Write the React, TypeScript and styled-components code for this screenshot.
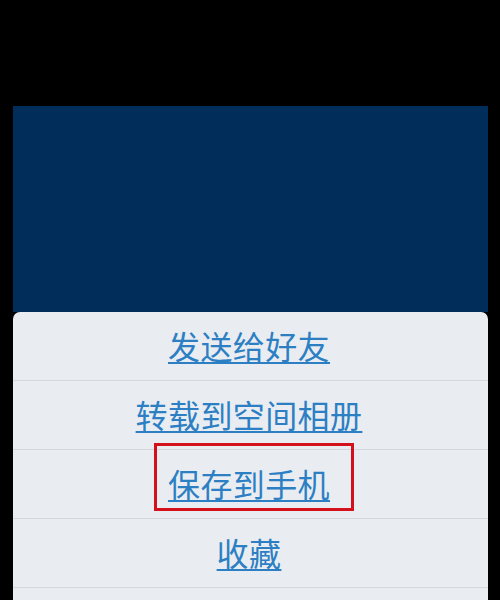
import React from 'react';
import styled, { createGlobalStyle } from 'styled-components';

const GlobalStyle = createGlobalStyle`
  html, body {
    margin: 0;
    padding: 0;
    background: #000;
  }
  body {
    font-family: "Noto Sans CJK SC", "Noto Sans", sans-serif;
  }
`;

const Page = styled.div`
  width: 500px;
  height: 600px;
  overflow: hidden;
  background: #000;
  padding-top: 106px;
  box-sizing: border-box;
`;

const Screen = styled.div`
  margin: 0 12px 0 13px;
  display: flex;
  flex-direction: column;
`;

const Backdrop = styled.div`
  height: 206px;
  background: #002d59;
`;

const Sheet = styled.div`
  background: #e9edf1;
  border-radius: 7px 7px 0 0;
  display: flex;
  flex-direction: column;
`;

const Row = styled.div`
  position: relative;
  height: 68px;
  border-bottom: 1px solid #d3d8dd;
  display: flex;
  align-items: center;
  justify-content: center;
`;

const Action = styled.a`
  font-size: 32px;
  line-height: 1;
  margin-top: -3px;
  margin-left: -3px;
  color: #2d7fc4;
  text-decoration: underline;
  text-decoration-thickness: 2px;
  text-underline-offset: 3px;
  letter-spacing: 0.4px;
  cursor: pointer;
`;

const Highlight = styled.div`
  position: absolute;
  top: -7px;
  left: calc(50% - 97px);
  width: 200px;
  height: 68px;
  border: 3px solid #d2111b;
  box-sizing: border-box;
  pointer-events: none;
`;

const actions = ['发送给好友', '转载到空间相册', '保存到手机', '收藏'];

export default function App() {
  return (
    <Page>
      <GlobalStyle />
      <Screen>
        <Backdrop />
        <Sheet>
          {actions.map((label, i) => (
            <Row key={label}>
              <Action>{label}</Action>
              {i === 2 && <Highlight />}
            </Row>
          ))}
          <Row />
        </Sheet>
      </Screen>
    </Page>
  );
}
